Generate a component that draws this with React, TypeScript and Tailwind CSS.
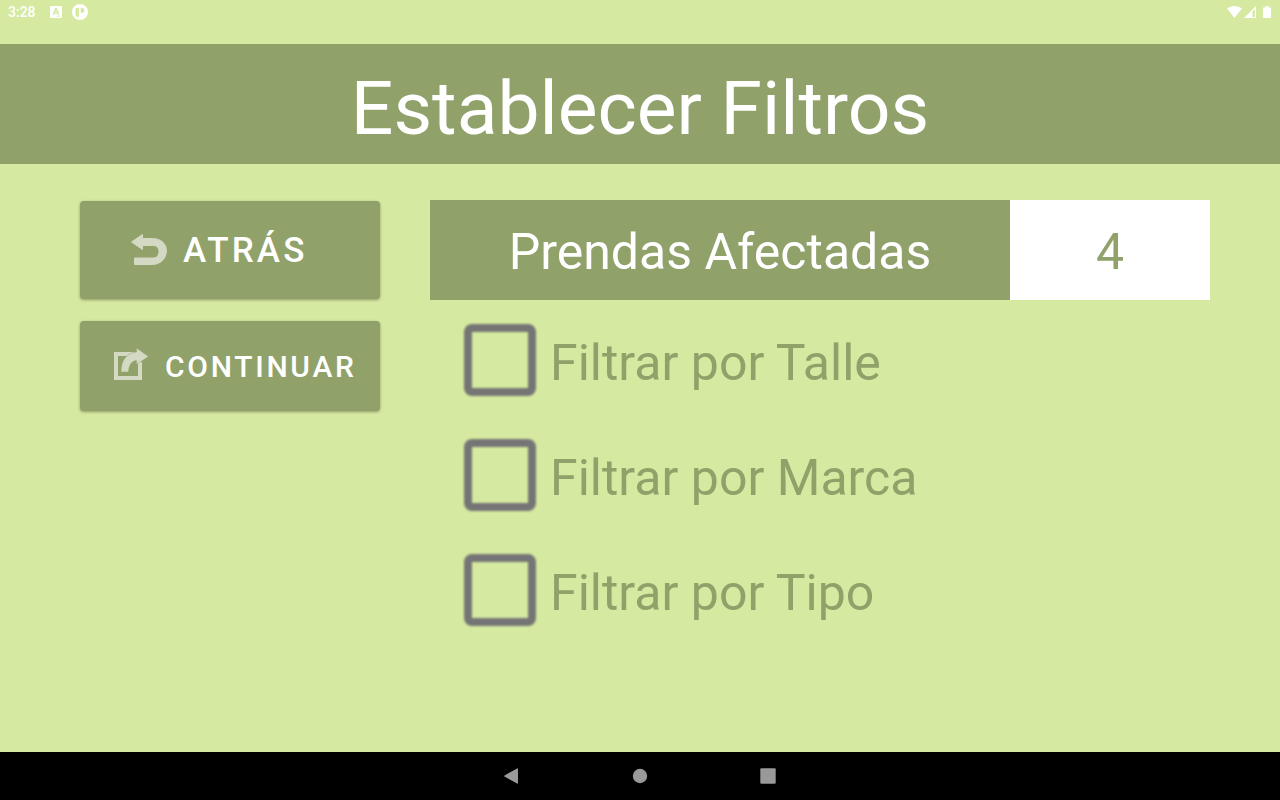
import type { ReactNode } from "react";

const filters = [
  { id: "talle", label: "Filtrar por Talle" },
  { id: "marca", label: "Filtrar por Marca" },
  { id: "tipo", label: "Filtrar por Tipo" },
];

function StatusBar() {
  return (
    <div className="flex h-6 items-center justify-between px-2 text-white">
      <div className="flex items-center">
        <span className="text-sm leading-6 font-medium">3:28</span>
        <svg className="ml-3.5 h-3 w-3" viewBox="0 0 12 12" aria-hidden="true">
          <path
            fill="currentColor"
            fillRule="evenodd"
            d="M1.2 0h9.600A1.200 1.200 0 0 1 12 1.200v9.600a1.200 1.200 0 0 1-1.200 1.200h-9.600A1.200 1.200 0 0 1 0 10.800v-9.600A1.200 1.200 0 0 1 1.200 0zM5.100 2 2.700 8.700h1.600l.4-1.300h2.600l.4 1.300h1.600L6.900 2zM6 4l.7 2.200H5.300zM6.500 9.800v.7h3.800v-.7z"
          />
        </svg>
        <svg className="ml-2.5 h-4 w-4" viewBox="0 0 16 16" aria-hidden="true">
          <path
            fill="currentColor"
            fillRule="evenodd"
            d="M8 0a8 8 0 1 1 0 16A8 8 0 0 1 8 0zM3.500 4v7.500a6 6 0 0 0 3.500 1.700V4zM8.700 4v4.800h1.400a2.400 2.400 0 0 0 0-4.800z"
          />
        </svg>
      </div>
      <svg className="h-4 w-[46px]" viewBox="0 0 46 16" fill="currentColor" aria-hidden="true">
        <path d="M1 4.600C5.200 1.200 11.800 1.200 16 4.600L8.500 14z" />
        <path fillRule="evenodd" d="M30 2v12H18zM28.900 5 26.500 7.400v5.600h2.400z" />
        <path d="M39.500 2h3v1.500H45V14h-8V3.500h2.500z" />
      </svg>
    </div>
  );
}

function ActionButton({ className, children }: { className: string; children: ReactNode }) {
  return (
    <button
      type="button"
      className={`flex w-full items-center rounded-[4px] bg-[#90a16a] font-medium tracking-[0.09em] text-white uppercase shadow-[0_1px_3px_rgba(0,0,0,0.35)] ${className}`}
    >
      {children}
    </button>
  );
}

function BackIcon() {
  return (
    <svg className="h-9 w-9 shrink-0 blur-[0.5px]" viewBox="0 0 36 36" aria-hidden="true">
      <path
        fill="#d3d9c3"
        stroke="#d3d9c3"
        strokeLinejoin="round"
        d="M.5 10 11.500 2.500V6.500H21.500C30 6.500 35.500 12 35.500 18.800S30 32.500 21.500 32.500H3.500V26H21.500C26 26 28 23.300 28 19.500S26 13.500 21.500 13.500H11.500V17.500z"
      />
    </svg>
  );
}

function ShareIcon() {
  return (
    <svg className="h-9 w-9 shrink-0 blur-[0.5px]" viewBox="0 0 36 36" aria-hidden="true">
      <path fill="none" stroke="#d3d9c3" strokeWidth="4" d="M21 6H3V30H27V14" />
      <path
        fill="#d3d9c3"
        stroke="#90a16a"
        strokeWidth="0.5"
        d="M23.500 0 35.500 8.500 23.500 16.500V12.500C18.500 13 16 17 15.500 24H8C8 12 14 4.500 23.500 4z"
      />
    </svg>
  );
}

function NavigationBar() {
  return (
    <nav aria-label="Sistema" className="flex h-12 items-center justify-center gap-26 bg-black">
      <button type="button" aria-label="Volver" className="h-6 w-6">
        <svg viewBox="0 0 24 24" aria-hidden="true">
          <path fill="#999" d="M17 4.500Q18 4 18 5V19Q18 20 17 19.500L4.500 12.600Q4 12 4.500 11.400z" />
        </svg>
      </button>
      <button type="button" aria-label="Inicio" className="h-6 w-6">
        <svg viewBox="0 0 24 24" aria-hidden="true">
          <circle cx="12" cy="12" r="7.200" fill="#999" />
        </svg>
      </button>
      <button type="button" aria-label="Recientes" className="h-6 w-6">
        <svg viewBox="0 0 24 24" aria-hidden="true">
          <rect x="4.300" y="4.300" width="15.400" height="15.400" rx="1" fill="#999" />
        </svg>
      </button>
    </nav>
  );
}

export default function App() {
  return (
    <div className="flex min-h-screen flex-col bg-[#d5e9a0] font-['Roboto',sans-serif]">
      <StatusBar />
      <header className="mt-5 bg-[#90a16a] pt-5 pb-3">
        <h1 className="text-center text-[75px] leading-[88px] text-white">Establecer Filtros</h1>
      </header>
      <main className="flex flex-1 gap-[50px] pt-9 pr-[70px] pb-9 pl-20">
        <div className="flex w-[300px] shrink-0 flex-col gap-[22px] pt-px">
          <ActionButton className="h-[98px] gap-4 pl-[51px] text-[35px]">
            <BackIcon />
            <span className="pt-0.5">Atrás</span>
          </ActionButton>
          <ActionButton className="h-[90px] gap-4 pl-[33px] text-3xl">
            <ShareIcon />
            <span className="pt-0.5">Continuar</span>
          </ActionButton>
        </div>
        <section className="min-w-0 flex-1">
          <div className="flex text-center text-[50px] leading-[96px]">
            <h2 id="count-label" className="flex-1 bg-[#90a16a] pt-1 text-white">
              Prendas Afectadas
            </h2>
            <output aria-labelledby="count-label" className="w-[200px] bg-white pt-1 text-[#90a16a]">
              4
            </output>
          </div>
          <div className="mt-6 flex flex-col gap-[43px] pl-[34px]">
            {filters.map(({ id, label }) => (
              <div key={id} className="flex h-[72px] items-center gap-3.5">
                <input
                  id={id}
                  type="checkbox"
                  className="h-[72px] w-[72px] shrink-0 appearance-none rounded-lg border-8 border-[#757575] blur-[1px] checked:bg-[#90a16a]"
                />
                <label htmlFor={id} className="pt-1.5 text-[50px] leading-[66px] text-[#90a16a]">
                  {label}
                </label>
              </div>
            ))}
          </div>
        </section>
      </main>
      <NavigationBar />
    </div>
  );
}
